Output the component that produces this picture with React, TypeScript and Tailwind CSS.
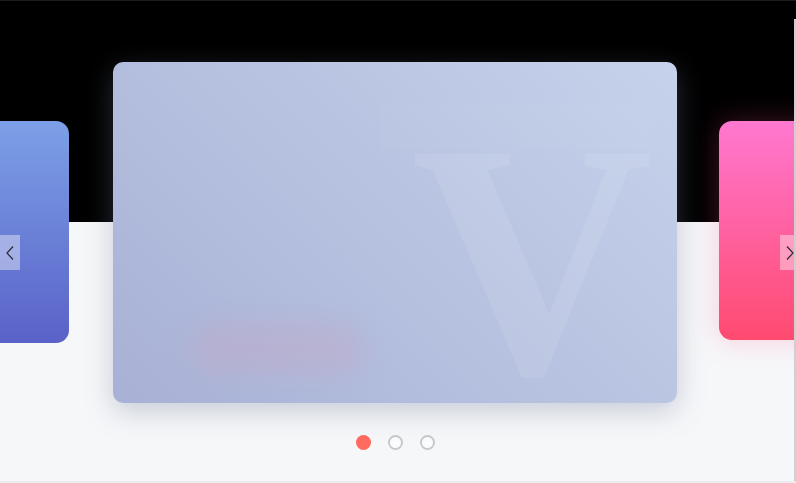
import React from 'react';

const slides = ['left', 'center', 'right'];

function Chevron({ dir }: { dir: 'left' | 'right' }) {
  return (
    <svg width="8" height="14" viewBox="0 0 8 14" fill="none">
      <polyline
        points={dir === 'left' ? '7,0.5 1,7 7,13.5' : '1,0.5 7,7 1,13.5'}
        stroke="#2a2a33"
        strokeWidth="1.2"
      />
    </svg>
  );
}

export default function App() {
  const active = 0;

  return (
    <div
      className="relative w-[796px] h-[483px] overflow-hidden border-t border-[#1c1c1c] bg-[linear-gradient(to_bottom,#000_221px,#f6f7f9_221px)]"
      style={{ fontFamily: '"Liberation Sans", Arial, sans-serif' }}
    >
      {/* ── Cards row ── */}
      <div className="flex items-start pt-[61px]">
        {/* previous slide */}
        <div className="shrink-0 -ml-[131px] mt-[59px] w-[200px] h-[222px] rounded-[13px] bg-[linear-gradient(to_bottom,#7ca0e7,#5a62c8)]" />

        {/* current slide */}
        <div className="relative shrink-0 ml-[44px] w-[564px] h-[341px] rounded-[10px] overflow-hidden bg-[linear-gradient(45deg,#a8b1d5,#c6d2eb)] shadow-[0_8px_28px_rgba(110,120,150,0.35)]">
          <div className="absolute left-[268px] top-[40px] w-[272px] h-[48px] bg-white/[0.025]" />
          <div className="absolute left-[78px] top-[262px] w-[172px] h-[50px] rounded-full bg-[#c4a7c6]/40 blur-md" />
          <span
            className="absolute right-[24px] top-[64px] text-[335px] leading-[0.8] font-bold text-white/[0.09] select-none"
            style={{ fontFamily: '"Liberation Serif", "Times New Roman", serif' }}
          >
            V
          </span>
        </div>

        {/* next slide */}
        <div className="shrink-0 ml-[42px] mt-[59px] w-[200px] h-[219px] rounded-[13px] bg-[linear-gradient(to_bottom,#ff78d0,#ff4a70)] shadow-[0_0_28px_rgba(255,80,140,0.25)]" />
      </div>

      {/* ── Pagination ── */}
      <div className="flex justify-center gap-[17px] mt-[32px] pr-[6px]">
        {slides.map((s, i) => (
          <span
            key={s}
            className={
              i === active
                ? 'w-[15px] h-[15px] rounded-full bg-[#ff6b5e]'
                : 'w-[15px] h-[15px] rounded-full border-2 border-[#c9c9cc] bg-white/60'
            }
          />
        ))}
      </div>

      {/* ── Arrows ── */}
      <button className="absolute left-0 top-[234px] w-5 h-[35px] flex items-center justify-center bg-white/40">
        <Chevron dir="left" />
      </button>
      <button className="absolute left-[780px] top-[234px] w-5 h-[35px] flex items-center justify-center bg-white/40">
        <Chevron dir="right" />
      </button>

      {/* scroll edge */}
      <div className="absolute right-0 top-[18px] bottom-0 w-[2px] bg-[#cfcfd2]" />
      <div className="absolute left-0 right-0 bottom-0 h-[2px] bg-[#ececee]" />
    </div>
  );
}
